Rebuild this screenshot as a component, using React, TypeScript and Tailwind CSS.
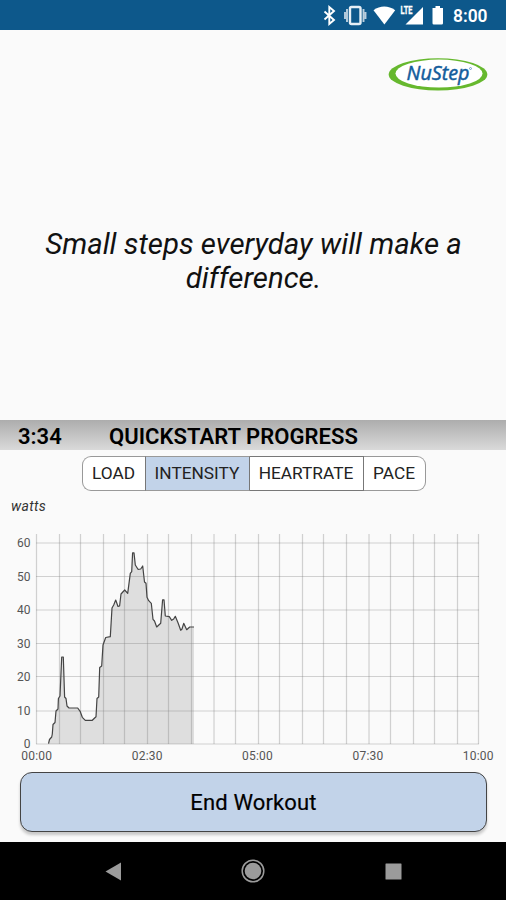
// src/App.tsx
// Workout screen: quote, progress chart and end button

interface Tab {
  label: string;
  className: string;
}

const tabs: Tab[] = [
  { label: "LOAD", className: "w-[63px] rounded-l-[9px] border-l bg-white" },
  { label: "INTENSITY", className: "w-[105px] border-x border-x-[#777] bg-[#c2d3e9]" },
  { label: "HEARTRATE", className: "w-[114px] border-r border-y-[#777] border-r-[#777] bg-white" },
  { label: "PACE", className: "w-[62px] rounded-r-[9px] border-r bg-white" },
];

const columns = [
  36.5, 59.5, 80.5, 103.5, 124.5, 147.5, 168.5, 191.5, 214, 235.5, 258.5,
  279.5, 302.5, 323.5, 346.5, 369, 390.5, 413.5, 434.5, 457.5, 478.5,
];

const rows = [
  { watts: 60, y: 23 },
  { watts: 50, y: 56.5 },
  { watts: 40, y: 90 },
  { watts: 30, y: 123.5 },
  { watts: 20, y: 156.5 },
  { watts: 10, y: 191 },
  { watts: 0, y: 224 },
];

const times = [
  { label: "00:00", x: 36.8 },
  { label: "02:30", x: 147.3 },
  { label: "05:00", x: 257.5 },
  { label: "07:30", x: 368 },
  { label: "10:00", x: 478.3 },
];

const trace =
  "48.5,223.7 49.5,219.5 51.7,217 52.3,214 53,204.5 55,202.5 56,191 58,189 58.4,178.5 60,176 61.7,137 63.3,137 64.6,177 66,178.5 67,186 69,188 77.7,188 80.3,191.7 82.3,197.3 85.3,200.3 92.3,200.3 96,196.7 97,178.5 98.7,177 99.7,147.5 101.7,146 103,125 105.7,117.5 110.3,116.7 112,88 113.7,85 115.7,80 118,86.5 119.6,86 121,74 124.7,70 127.7,73.3 130.3,53.3 131.7,51.7 132.6,32.9 134,32.9 135.3,45 138,49.3 140.7,49 142.7,46 144.5,62 146,63.3 147,77.3 148.7,80.7 151.3,83.3 153,99.3 154.5,101 156.7,107 160.7,103.3 162.6,79.8 164,79.8 165.3,96 169.3,96.7 171.7,100.3 173.7,99 175.3,96.3 178,102.7 180.7,110.3 182,109 183.7,103.3 186.7,109.7 189.7,107 194,107";

function StatusBar() {
  return (
    <header className="flex h-[30px] shrink-0 items-center bg-[#0d588b] text-white">
      <svg width="506" height="30" viewBox="0 0 506 30" fill="white" aria-label="Status">
        <path d="M324.5 11.5 334 20 329.3 24V7l4.7 4-9.5 8.5" fill="none" stroke="white" strokeWidth="1.9" />
        <rect x="350" y="7" width="10.5" height="17" rx="1.5" fill="none" stroke="#e6eff6" strokeWidth="2.4" />
        <path d="M347 9v13M363.5 9v13M345 12v7M365.5 12v7" stroke="#b9cede" strokeWidth="1.9" />
        <path d="M373.5 10.3C380 5.3 388.5 5.3 395.2 10.3L384.4 24.4Z" />
        <path d="M423 7v17.5h-17.5Z" />
        <path d="M400 4h14.5v9l-4 3H400Z" fill="#0d588b" />
        <text
          x="400.5"
          y="14.3"
          fontSize="10.5"
          fontWeight="700"
          stroke="white"
          strokeWidth="0.3"
          textLength="12"
          lengthAdjust="spacingAndGlyphs"
        >
          LTE
        </text>
        <path d="M435.5 6h4.5v2h3v15.2q0 1.3-1.3 1.3h-7.9q-1.3 0-1.3-1.3V8h3Z" />
        <text x="453" y="22" fontSize="17.5" fontWeight="600" textLength="34.5" lengthAdjust="spacingAndGlyphs">
          8:00
        </text>
      </svg>
    </header>
  );
}

function Logo() {
  return (
    <svg width="100" height="34" viewBox="0 0 100 34" aria-label="NuStep">
      <ellipse cx="50" cy="17.4" rx="49.3" ry="16.1" fill="#66b82e" />
      <ellipse cx="51" cy="16.6" rx="43.5" ry="14" fill="white" />
      <text
        x="18.5"
        y="22.5"
        fill="#125d9c"
        stroke="#125d9c"
        strokeWidth="0.5"
        fontFamily="Open Sans, sans-serif"
        fontSize="20"
        fontStyle="italic"
        fontWeight="500"
        textLength="63"
        lengthAdjust="spacingAndGlyphs"
      >
        NuStep
      </text>
      <circle cx="82.5" cy="11.5" r="1" fill="none" stroke="#125d9c" strokeWidth="0.5" />
    </svg>
  );
}

function WattsChart() {
  return (
    <svg width="506" height="246" viewBox="0 0 506 246" className="block" aria-label="Intensity">
      <polygon points={`${trace} 194,224 48.5,224`} fill="#dedede" />
      <g stroke="#808080" strokeOpacity="0.35" strokeWidth="1.2">
        {columns.map((x) => (
          <line key={x} x1={x} x2={x} y1="14" y2="224" />
        ))}
        {rows.map((row) => (
          <line key={row.watts} x1="36" x2="479" y1={row.y} y2={row.y} />
        ))}
      </g>
      <polyline points={trace} fill="none" stroke="#444" strokeWidth="1.2" strokeLinejoin="round" />
      <g fill="#555" fontSize="12">
        {rows.map((row) => (
          <text key={row.watts} x="30.8" y={row.y + 4} textAnchor="end" letterSpacing="0.2">
            {row.watts}
          </text>
        ))}
        {times.map((time) => (
          <text key={time.label} x={time.x} y="240.3" textAnchor="middle" letterSpacing="0.2">
            {time.label}
          </text>
        ))}
      </g>
    </svg>
  );
}

export default function App() {
  return (
    <div className="flex h-[900px] w-[506px] flex-col overflow-hidden bg-[#fafafa] font-[Roboto,sans-serif] text-black">
      <StatusBar />

      {/* Quote */}
      <main className="flex h-[390px] shrink-0 flex-col">
        <div className="flex justify-end pr-[18px] pt-[27px]">
          <Logo />
        </div>
        <p className="mt-[136px] pl-8 pr-[31px] text-center text-[29.4px] italic leading-[34px] text-[#111]">
          Small steps everyday will make a difference.
        </p>
      </main>

      {/* Progress */}
      <section className="flex h-[422px] shrink-0 flex-col">
        <div className="flex h-[30px] shrink-0 items-center bg-linear-to-b from-[#adadad] to-[#dadada] pl-[18px] pt-0.5 text-[22px] font-semibold">
          <span className="w-[91px]">3:34</span>
          <h1 className="tracking-[0.05px]">QUICKSTART PROGRESS</h1>
        </div>
        <div className="mt-[6px] flex h-[35px] shrink-0 justify-center pl-px">
          {tabs.map((tab) => (
            <button
              key={tab.label}
              className={`flex items-center justify-center border-y border-[#999] pt-px text-[17.3px] text-[#222] ${tab.className}`}
            >
              {tab.label}
            </button>
          ))}
        </div>
        <div className="h-[29px] pl-[11px] pt-[5px] text-[14px] italic tracking-[0.3px] text-[#333]">
          watts
        </div>
        <WattsChart />
        <div className="flex pl-5 pr-[19px] pt-[6px]">
          <button className="h-[60px] w-full rounded-[12px] border-[1.5px] border-[#444] bg-[#c2d3e9] pt-px text-[22px] tracking-[0.15px] shadow-[0_3px_3px_rgba(0,0,0,0.2)] [-webkit-text-stroke:0.2px_black]">
            End Workout
          </button>
        </div>
      </section>

      {/* Android navigation */}
      <nav className="flex h-[58px] shrink-0 bg-black">
        <svg width="506" height="58" viewBox="0 0 506 58" fill="#9b9b9b" aria-label="Navigation">
          <path d="M121 20.5v18l-15.5-9Z" />
          <circle cx="253" cy="29" r="10.8" fill="none" stroke="#9b9b9b" strokeWidth="1.5" />
          <circle cx="253" cy="29" r="8.3" />
          <rect x="385.5" y="21.5" width="16" height="16" rx="0.5" />
        </svg>
      </nav>
    </div>
  );
}
